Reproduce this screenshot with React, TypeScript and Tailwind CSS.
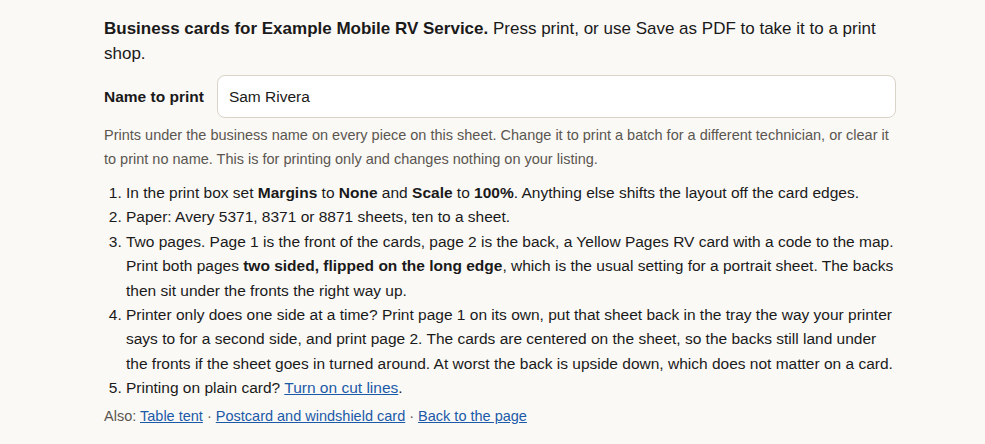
import React from "react";

export default function App() {
  return (
    <div className="min-h-[444px] bg-[#faf9f6] text-[#1a1a1a]" style={{ fontFamily: '"Liberation Sans", Arial, sans-serif' }}>
      <div className="pl-[104px] pt-[16px] w-[896px]">
        <p className="text-[17px] leading-[25px]">
          <b>Business cards for Example Mobile RV Service.</b> Press print, or use Save as PDF to take it to a print shop.
        </p>
        <div className="mt-[9px] flex items-center gap-[13px]">
          <label className="text-[15.5px] font-bold whitespace-nowrap">Name to print</label>
          <input
            defaultValue="Sam Rivera"
            className="flex-1 h-[43px] rounded-lg border border-[#d9d3c8] bg-white px-[11px] text-[15.5px] text-[#1a1a1a] outline-none"
          />
        </div>
        <p className="mt-[5px] text-[14.5px] leading-[24px] text-[#5a5650]">
          Prints under the business name on every piece on this sheet. Change it to print a batch for a different technician, or clear it to print no name. This is for printing only and changes nothing on your listing.
        </p>
        <ol className="mt-[10px] list-decimal pl-[22px] text-[15.5px] leading-[24.4px]">
          <li>In the print box set <b>Margins</b> to <b>None</b> and <b>Scale</b> to <b>100%</b>. Anything else shifts the layout off the card edges.</li>
          <li>Paper: Avery 5371, 8371 or 8871 sheets, ten to a sheet.</li>
          <li>Two pages. Page 1 is the front of the cards, page 2 is the back, a Yellow Pages RV card with a code to the map. Print both pages <b>two sided, flipped on the long edge</b>, which is the usual setting for a portrait sheet. The backs then sit under the fronts the right way up.</li>
          <li>Printer only does one side at a time? Print page 1 on its own, put that sheet back in the tray the way your printer says to for a second side, and print page 2. The cards are centered on the sheet, so the backs still land under the fronts if the sheet goes in turned around. At worst the back is upside down, which does not matter on a card.</li>
          <li>Printing on plain card? <a href="#" className="text-[#1c5aa8] underline">Turn on cut lines</a>.</li>
        </ol>
        <p className="mt-[3px] text-[14.5px] leading-[24px] text-[#5a5650]">
          Also: <a href="#" className="text-[#1c5aa8] underline">Table tent</a> · <a href="#" className="text-[#1c5aa8] underline">Postcard and windshield card</a> · <a href="#" className="text-[#1c5aa8] underline">Back to the page</a>
        </p>
      </div>
    </div>
  );
}
